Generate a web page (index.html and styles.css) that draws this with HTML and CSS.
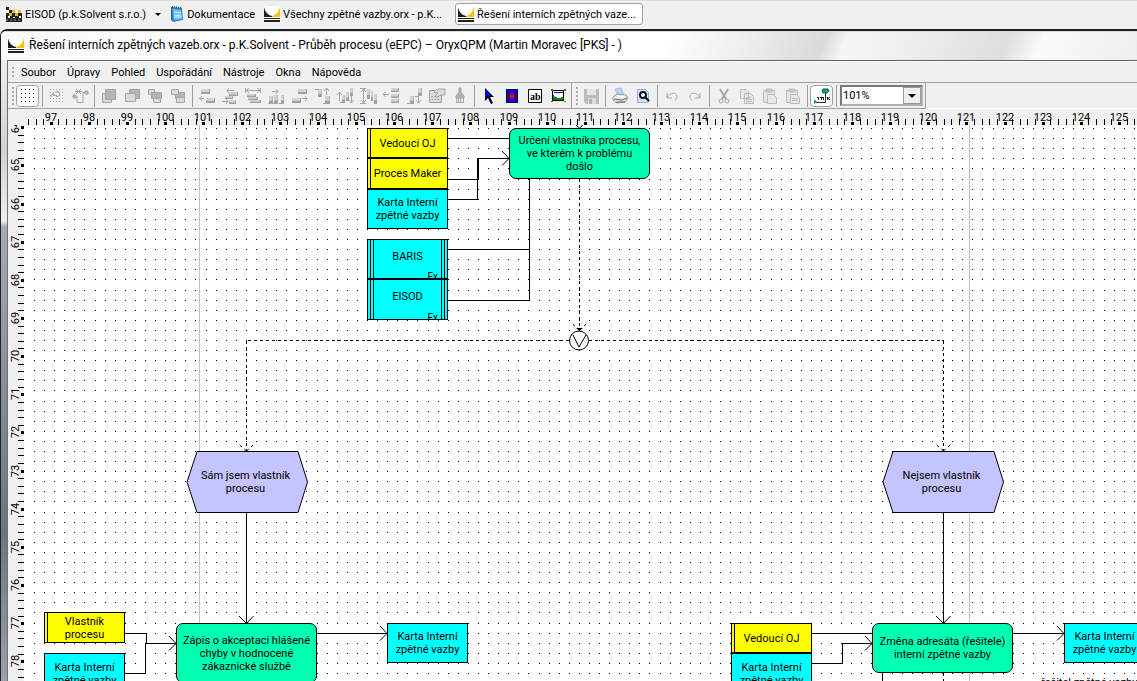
FILE: index.html
```html
<!DOCTYPE html>
<html lang="cs">
<head>
<meta charset="utf-8">
<title>OryxQPM</title>
<link rel="stylesheet" href="styles.css">
</head>
<body>
<svg class="defs" aria-hidden="true">
  <symbol id="logo" viewBox="0 0 16 16"><path fill="#fff" d="M0 0h16v16H0z"/><path fill="#231f20" d="M0 1c1 5 4 8 8 9v1H0z"/><path fill="#f5c211" d="M16 0v11H8v-1c4-1 7-4 8-10z"/><path fill="#231f20" d="M0 12h16v1H0zM0 14h16v2H0z"/></symbol>
  <symbol id="eisod" viewBox="0 0 16 16"><path fill="#222" d="M0 10h16v6H0zM0 1h3v3H0zM3 4h3v3H3zM0 7h3v3H0zM6 7h3v3H6zM12 7h4v3h-4z"/><path fill="#e9b90f" d="M6 4h3v3H6zM9 7h3v3H9zM12 4h3v3h-3zM3 7h3v3H3z"/><path fill="#fff" d="M2 10h2v2H2zM13 10h2v2h-2zM7 11h2v1H7z"/><path stroke="#999" stroke-dasharray="2 2" d="M0 14h16"/></symbol>
  <symbol id="note" viewBox="0 0 14 16"><path fill="#2b8cc4" d="M2 1l10 1 1 12-10 2-2-2z"/><path fill="#6ec3ec" d="M3 3l8 1 1 9-8 1z"/><path stroke="#d8f0fb" d="M4 6l7 1M4 9l7 1M4 11h7"/><path stroke="#315d7c" stroke-dasharray="1 1" stroke-width="2" d="M2 1l10 1"/><path fill="#1b6d9d" d="M1 1h1v13H1z"/></symbol>
  <symbol id="bar-h" viewBox="0 0 9 5" preserveAspectRatio="none"><path fill="#a0a0a0" d="M0 0h9v5H0z"/><path fill="#d2d2d2" d="M0 0h8v3H0z"/></symbol>
</svg>

<nav class="taskbar" aria-label="Okna">
  <button class="task"><svg class="i16"><use href="#eisod"/></svg><span>EISOD (p.k.Solvent s.r.o.)</span><i class="caret"></i></button>
  <button class="task"><svg class="i14"><use href="#note"/></svg><span>Dokumentace</span></button>
  <button class="task"><svg class="i16"><use href="#logo"/></svg><span>Všechny zpětné vazby.orx - p.K...</span></button>
  <button class="task task-active"><svg class="i16"><use href="#logo"/></svg><span>Řešení interních zpětných vaze...</span></button>
</nav>

<main class="window">
  <header class="titlebar"><svg class="i16"><use href="#logo"/></svg><h1>Řešení interních zpětných vazeb.orx - p.K.Solvent - Průběh procesu (eEPC) – OryxQPM (Martin Moravec [PKS] - )</h1></header>
  <div class="client">
    <nav class="menu" aria-label="Nabídka">
      <i class="grip"></i>
      <button>Soubor</button><button>Úpravy</button><button>Pohled</button><button>Uspořádání</button><button>Nástroje</button><button>Okna</button><button>Nápověda</button>
    </nav>
    <div class="toolbars">
      <div class="toolbar toolbar-edit" role="toolbar" aria-label="Úpravy diagramu">
        <i class="grip"></i>
        <button class="tool pressed" aria-label="Mřížka"><svg class="ic"><path stroke="#000" stroke-dasharray="1 3" d="M1 1.500h14M1 5.500h14M1 9.500h14M1 13.500h14"/></svg></button>
        <i class="sep"></i>
        <button class="tool" aria-label="Přichytit k mřížce"><svg class="ic dim"><path stroke-dasharray="1 2" d="M1 1.500h14M1 4.500h14M1 7.500h14M1 10.500h14M1 13.500h14"/><path d="M2 9l2-4 2 3M6 5l3-2 2 4-3 2M4 5l4 4"/></svg></button>
        <button class="tool" aria-label="Spojnice"><svg class="ic dim"><path d="M2 8.500h3v6h6V4.500h3M4 1l5 5M9 1L4 6M3 3.500h7"/><path class="f" d="M1 7h3v3H1zM13 3h3v3h-3z"/></svg></button>
        <i class="sep"></i>
        <button class="tool" aria-label="Do popředí"><svg class="ic dim"><path class="p" d="M1.500 5.500h9v9h-9z"/><path class="f" d="M4.500 1.500h10v10h-10z"/></svg></button>
        <button class="tool" aria-label="Do pozadí"><svg class="ic dim"><path class="f" d="M5.500 1.500h10v9h-10z"/><path class="p" d="M1.500 5.500h10v8h-10z"/></svg></button>
        <button class="tool" aria-label="Vpřed"><svg class="ic dim"><path class="p" d="M1.500 1.500h6v5h-6zM6.500 8.500h7v6h-7z"/><path class="f" d="M4.500 4.500h10v6h-10z"/></svg></button>
        <button class="tool" aria-label="Vzad"><svg class="ic dim"><path class="f" d="M5.500 4.500h9v6h-9z"/><path class="p" d="M1.500 1.500h7v5h-7zM6.500 9.500h8v5h-8z"/></svg></button>
        <i class="sep"></i>
        <button class="tool" aria-label="Zarovnat vlevo"><svg class="ic dim"><use href="#bar-h" x="2" y="1" width="9" height="5"/><use href="#bar-h" x="7" y="10" width="9" height="5"/><path d="M0 10.500h5M3 8l-2 2.500 2 2.500"/></svg></button>
        <button class="tool" aria-label="Zarovnat na střed"><svg class="ic dim"><use href="#bar-h" x="7" y="4" width="9" height="4"/><use href="#bar-h" x="3" y="8" width="8" height="3"/><use href="#bar-h" x="7" y="12" width="7" height="4"/><path d="M5 2.500h7M7 0L5 2.500 7 5M0 13.500h6M4 11l2 2.500L4 16"/></svg></button>
        <button class="tool" aria-label="Stejná šířka"><svg class="ic dim"><path d="M.5 0v5M15.500 0v5M1 2.500h14M4 0L1 2.500 4 5M12 0l3 2.500L12 5"/><use href="#bar-h" x="2" y="6" width="9" height="3"/><use href="#bar-h" x="3" y="9" width="10" height="3"/><use href="#bar-h" x="5" y="12" width="11" height="3"/></svg></button>
        <button class="tool" aria-label="Rozložit vodorovně"><svg class="ic dim"><path d="M4 3.500h6M8 1l2 2.500L8 6"/><use href="#bar-h" x="1" y="8" width="4" height="8"/><use href="#bar-h" x="6" y="7" width="4" height="9"/><use href="#bar-h" x="13" y="7" width="3" height="9"/><path d="M0 15.500h9M11 15.500h5"/></svg></button>
        <button class="tool" aria-label="Zarovnat vpravo"><svg class="ic dim"><use href="#bar-h" x="7" y="1" width="9" height="5"/><use href="#bar-h" x="1" y="10" width="9" height="5"/><path d="M11 10.500h5M14 8l2 2.500-2 2.500"/></svg></button>
        <button class="tool" aria-label="Zarovnat nahoru"><svg class="ic dim"><use href="#bar-h" x="4" y="1" width="4" height="8"/><use href="#bar-h" x="11" y="8" width="5" height="8"/><path d="M1 1.500h4M9 15.500h4M12.500 0v7M10 3l2.500-3L15 3"/></svg></button>
        <button class="tool" aria-label="Zarovnat na střed svisle"><svg class="ic dim"><use href="#bar-h" x="5" y="7" width="3" height="8"/><use href="#bar-h" x="9" y="4" width="3" height="9"/><use href="#bar-h" x="13" y="0" width="3" height="8"/><path d="M2.500 4v9M0 7l2.500-3L5 7M14.500 8v6M12 12l2.500 3 2.500-3M3 14.500h3"/></svg></button>
        <button class="tool" aria-label="Stejná výška"><svg class="ic dim"><path d="M0 .5h6M0 15.500h6M3.500 1v14M1 4l2.500-3L6 4M1 12l2.500 3L6 12"/><use href="#bar-h" x="7" y="1" width="3" height="10"/><use href="#bar-h" x="11" y="3" width="2" height="10"/><use href="#bar-h" x="14" y="6" width="3" height="10"/></svg></button>
        <button class="tool" aria-label="Rozložit svisle"><svg class="ic dim"><path d="M0 6.500h6M3 4L0 6.500 3 9"/><use href="#bar-h" x="8" y="0" width="8" height="4"/><use href="#bar-h" x="8" y="6" width="8" height="4"/><use href="#bar-h" x="8" y="11" width="8" height="4"/></svg></button>
        <button class="tool" aria-label="Zarovnat dolů"><svg class="ic dim"><use href="#bar-h" x="4" y="8" width="4" height="8"/><use href="#bar-h" x="12" y="0" width="4" height="8"/><path d="M1 15.500h5M9 8.500h4M12.500 9v6M10 12l2.500 3 2.500-3"/></svg></button>
        <button class="tool" aria-label="Vlastnosti"><svg class="ic dim"><path class="p" d="M.5 2.500h12v12H.5z"/><path stroke-dasharray="2 1" d="M2 8.500h9M2 11.500h9"/><path class="p" d="M5 4l3-3h8v6h-4L8 9 6 8l3-3z"/></svg></button>
        <button class="tool" aria-label="Formát"><svg class="ic dim"><path class="f" d="M7 0h2v4l3 4v2H4V8l3-4z"/><path d="M4.500 10v5M6.500 10v5M8.500 10v5M11.500 10v5M4 14.500h8"/></svg></button>
        <i class="sep"></i>
        <button class="tool" aria-label="Ukazatel"><svg class="ic"><path fill="#000" d="M4 0l9 9H9l3 6-2 1-3-6-3 3z"/><path fill="#00f" d="M4 1v9l2-3 3 6-2-6h3z"/></svg></button>
        <button class="tool" aria-label="Objekt"><svg class="ic"><path fill="#00f" stroke="#000" d="M2.500 1.500h11v13h-11z"/><path fill="#f00" stroke="#700" d="M7 5h2l2 3v1l-2 2H7L5 9V8z"/></svg></button>
        <button class="tool" aria-label="Text"><svg class="ic"><path fill="#fff" stroke="#000" d="M1.500 1.500h13v13h-13z"/><text class="ab" x="3" y="12">ab</text></svg></button>
        <button class="tool" aria-label="Obrázek"><svg class="ic"><path fill="#fff" stroke="#000" d="M2.500 2.500h11v10h-11z"/><path fill="#108020" d="M3 6l2 3h8v3H3z"/><path fill="#fff" d="M7 7h4v3H7z"/><path fill="#00f" d="M4 4h9v1H4z"/><path fill="#806010" d="M1 1h2v2H1zM14 1h2v2h-2zM1 13h2v1H1zM14 13h2v1h-2z"/></svg></button>
      </div>
      <div class="toolbar toolbar-file" role="toolbar" aria-label="Soubor">
        <i class="grip"></i>
        <button class="tool" aria-label="Uložit"><svg class="ic"><path fill="#bcbcbc" d="M1 1h15v15H3l-2-2z"/><path fill="#e4e4e4" d="M4 1h9v6H4z"/><path fill="#dcdcdc" d="M5 10h8v6H5z"/><path fill="#b2b2b2" d="M6 11h3v5H6z"/></svg></button>
        <i class="sep"></i>
        <button class="tool" aria-label="Tisk"><svg class="ic"><path fill="#b9d2fa" stroke="#a9bfe8" d="M3 1l6-1 3 7-6 2z"/><path fill="#e8e8e8" stroke="#999" d="M1 9l4-3 9 1 2 3-3 4-8 1-4-3z"/><path stroke="#666" d="M2 11l8 1 5-2M4 14h9"/><path stroke="#fff" d="M5 8l7 1"/></svg></button>
        <button class="tool" aria-label="Náhled"><svg class="ic"><path fill="#cfe0fa" stroke="#8fb0e4" d="M2.500 1.500h8l3 3v10h-11z"/><circle cx="8" cy="7" r="3" fill="#e8f5ff" stroke="#111" stroke-width="2"/><path stroke="#111" stroke-width="2" d="M10 9l4 4"/></svg></button>
        <i class="sep"></i>
        <button class="tool" aria-label="Zpět"><svg class="ic dim"><path d="M3 5v5h5M3 10c3-6 9-6 10-2 0 2 0 3-2 4"/></svg></button>
        <button class="tool" aria-label="Znovu"><svg class="ic dim"><path d="M13 5v5H8M13 10C10 4 4 4 3 8c0 2 0 3 2 4"/></svg></button>
        <i class="sep"></i>
        <button class="tool" aria-label="Vyjmout"><svg class="ic dim"><path stroke-width="2" d="M4 1l6 10M12 1L6 11"/><circle cx="5" cy="13" r="2"/><circle cx="11" cy="13" r="2"/></svg></button>
        <button class="tool" aria-label="Kopírovat"><svg class="ic soft"><path d="M1.500 1.500h6l2 2v7h-8zM5.500 5.500h6l3 3v7h-9z"/><path d="M7 9.500h5M7 11.500h6M7 13.500h6"/></svg></button>
        <button class="tool" aria-label="Vložit"><svg class="ic soft"><path d="M1.500 2.500h3v-1h5v1h3v12h-11z"/><path fill="#ccc" d="M4 1h6v3H4z"/><path d="M5.500 6.500h6l3 3v6h-9z"/></svg></button>
        <button class="tool" aria-label="Vložit jinak"><svg class="ic soft"><path d="M1.500 2.500h3v-1h5v1h3v12h-11z"/><path fill="#ccc" d="M4 1h6v3H4z"/><path d="M5.500 6.500h6l3 3v6h-9zM7 10.500h6M7 12.500h6"/></svg></button>
        <i class="sep"></i>
        <button class="tool pressed" aria-label="Popisky"><svg class="ic"><path fill="#10a870" stroke="#056040" d="M9 1h5l1 2-2 2H9L8 3z"/><path stroke="#333" d="M11.500 5v9M1 14.500h11"/><path stroke="#222" d="M3 9.500h2M4.500 9v3M6 9.500h3M7.500 9v3M9.500 9v3M13.500 9v3M16 9l-2 1.500 2 1.500"/><path fill="#10a870" d="M0 11l3 3-3 2z"/></svg></button>
        <i class="sep"></i>
        <label class="zoom"><select aria-label="Měřítko"><option>101%</option></select><i class="drop"></i></label>
      </div>
    </div>
    <section class="workspace" aria-label="Diagram procesu">
      <svg class="ruler-top" id="rulerTop"></svg>
      <svg class="ruler-left" id="rulerLeft"></svg>
      <div class="canvas" id="canvas">
        <svg class="drawing" id="drawing">
          <path id="dots" class="dots"/>
          <g transform="translate(-24 -125)">
            <path class="page" d="M199.500 125v900M969.500 125v900"/>
            <path class="wire" d="M448 138.500h61M448 179.500h30.500v-21M448 199.500h29.500v-41H509M448 249.500h81M448 300.500h81.500V179M246.500 513v110M943.500 513v110M125 633.500h21v10h30M125 673.500h20.500v-30M317 633.500h70M811 633.500h61M811 663.500h31.500v-20H872M1013 633.500h51M882.500 673v60"/>
            <path class="wire dash" d="M579.500 179v151M569 340.500H246M246.500 341v110M589 340.500h355M943.500 341v110M943.500 673v60"/>
            <path class="head" d="M502 151l7 7.500-7 7M239 616l7.500 7.500 7-7.500M936 616l7.500 7.500 7-7.500M169 636l7 7.500-7 7M380 626l7 7.500-7 7M865 636l7 7.500-7 7M1057 626l7 7.500-7 7M576 125l3.500 3 3.500-3"/>
            <path class="head dash" d="M579.500 330l-8-7M579.500 330l8-7M246.500 451l-8-7M246.500 451l8-7M943.500 451l-8-7M943.500 451l8-7"/>
            <path fill="#000" d="M576 328h7l-3.500 3z"/>
            <circle class="gate" cx="579" cy="340.500" r="9.500"/><path class="head" d="M573 335l6 12 7-12"/>
            <path class="event" d="M197 451.500h101l9.500 30.500-9.500 30.500H197L187 482zM893 451.500h101l9.500 30.500-9.500 30.500H893L883 482z"/>
          </g>
        </svg>
        <div class="nodes">
          <div class="node role n-owner1">Vedoucí OJ</div>
          <div class="node role n-maker">Proces Maker</div>
          <div class="node doc n-card1">Karta Interní<br>zpětné vazby</div>
          <div class="node app n-baris">BARIS<small>Fx</small></div>
          <div class="node app n-eisod">EISOD<small>Fx</small></div>
          <div class="node task-node n-assign">Určení vlastníka procesu,<br>ve kterém k problému<br>došlo</div>
          <div class="node label n-own">Sám jsem vlastník<br>procesu</div>
          <div class="node label n-notown">Nejsem vlastník<br>procesu</div>
          <div class="node role n-owner2">Vlastník<br>procesu</div>
          <div class="node doc n-card2">Karta Interní<br>zpětné vazby</div>
          <div class="node task-node n-accept">Zápis o akceptaci hlášené<br>chyby v hodnocené<br>zákaznické službě</div>
          <div class="node doc n-card3">Karta Interní<br>zpětné vazby</div>
          <div class="node role n-owner3">Vedoucí OJ</div>
          <div class="node doc n-card4">Karta Interní<br>zpětné vazby</div>
          <div class="node task-node n-change">Změna adresáta (řešitele)<br>interní zpětné vazby</div>
          <div class="node doc n-card5">Karta Interní<br>zpětné vazby</div>
          <div class="node note n-note">řešitel zpětné vazby</div>
        </div>
      </div>
    </section>
  </div>
</main>
<script src="script.js"></script>
</body>
</html>
```
FILE: styles.css
```css
* { box-sizing: border-box; }
html, body { height: 100%; margin: 0; }
body {
  display: flex; flex-direction: column; overflow: hidden;
  background: #f0f0f0; color: #000;
  font: 11px/13px Roboto, "DejaVu Sans Condensed", sans-serif;
}
button { font: inherit; color: inherit; background: none; border: 0; padding: 0; margin: 0; }
.defs { position: absolute; width: 0; height: 0; }
.i16 { width: 16px; height: 16px; flex: none; }
.i14 { width: 14px; height: 16px; flex: none; }

.taskbar { display: flex; align-items: flex-start; gap: 1px; flex: none; height: 29px; padding: 2px; border-top: 1px solid #dcdcdc; }
.task { display: flex; align-items: center; gap: 3px; height: 22px; padding: 0 3px; white-space: nowrap; border: 1px solid transparent; }
.task-active { background: #fff; border-color: #a0a0a0; border-radius: 3px; padding: 0 6px 0 2px; margin-left: 8px; }
.caret { border: 3px solid transparent; border-top-color: #000; border-bottom: 0; margin-left: 6px; }

.window { flex: 1; min-height: 0; display: flex; flex-direction: column; border-top: 2px solid #222; border-left: 1px solid #222; border-top-left-radius: 7px; padding-left: 6px;
  background: linear-gradient(180deg, #f6f6f6 0, #d5d0d2 120px, #f0ecee 190px, #a5abb5 196px, #6c7482 500px, #9aa1ac 100%); overflow: hidden; }
.titlebar { display: flex; align-items: center; gap: 5px; flex: none; height: 29px; margin-left: -6px; padding: 0 7px 2px;
  background: linear-gradient(115deg, #fafafa 0, #fff 34%, #fff 58%, #ececec 66%, #dadada 72%, #f6f6f6 74%, #eee 80%, #dedede 88%, #fafafa 91%, #eee 100%); border-top: 1px solid #ddd; }
.titlebar h1 { margin: 0; font: 12px/18px Roboto, "Noto Sans", sans-serif; white-space: nowrap; text-shadow: 0 0 6px #fff; }
.client { flex: 1; min-height: 0; display: flex; flex-direction: column; border-top: 1px solid #606060; border-left: 1px solid #707070; background: #f0f0f0; }

.grip { width: 2px; flex: none; background: repeating-linear-gradient(180deg, #a8a8a8 0 2px, transparent 2px 4px); }
.menu { display: flex; align-items: center; gap: 11px; height: 22px; flex: none; padding: 0 4px; border-top: 1px solid #fff; border-bottom: 1px solid #a0a0a0; white-space: nowrap; }
.menu .grip { height: 10px; margin-right: -4px; }

.toolbars { display: flex; flex: none; height: 26px; border-bottom: 1px solid #fff; }
.toolbar { display: flex; align-items: center; flex: none; height: 26px; border-bottom: 1px solid #a0a0a0; border-right: 1px solid #a0a0a0; }
.toolbar .grip { height: 18px; margin: 0 2px 0 4px; }
.toolbar-edit { padding-right: 2px; }
.toolbar-file .grip { margin-right: 1px; }
.tool { display: flex; align-items: center; justify-content: center; width: 23px; height: 22px; flex: none; }
.pressed { background: #fff; border: 1px solid #a0a0a0; border-radius: 4px; }
.sep { width: 1px; height: 22px; margin: 0 2px 0 3px; background: #a0a0a0; flex: none; }
.ic { width: 16px; height: 16px; flex: none; fill: none; overflow: visible; }
.dim { stroke: #a6a6a6; }
.dim .f { fill: #b4b4b4; }
.dim .p { fill: #dadada; }
.dim use { stroke: none; }
.soft { stroke: #bcbcbc; fill: #e6e6e6; }
.ab { font: bold 10px "Liberation Serif", serif; fill: #000; }
.zoom { display: flex; align-items: center; width: 83px; height: 21px; border: 2px solid #777; border-right-color: #b0b0b0; border-bottom-color: #b0b0b0; background: #fff; margin-right: 2px; margin-left: 1px; }
.zoom select { appearance: none; flex: 1; min-width: 0; border: 0; background: none; padding: 0 1px; font: inherit; }
.drop { display: flex; width: 18px; height: 17px; flex: none; align-items: center; justify-content: center; background: #f0f0f0; border: 1px solid #999; pointer-events: none; }
.drop::after { content: ""; border: 4px solid transparent; border-top-color: #000; border-bottom: 0; }

.workspace { flex: 1; min-height: 0; display: grid; grid-template: 16px 1fr / 16px 1fr; }
.ruler-top { grid-column: 1 / 3; width: 100%; height: 16px; font-size: 11px; }
.ruler-left { width: 16px; height: 100%; font-size: 11px; }
.canvas { position: relative; overflow: hidden; background: #fff; }
.drawing { position: absolute; inset: 0; width: 100%; height: 100%; fill: none; }
.dots { stroke: #000; shape-rendering: crispEdges; }
.page { stroke: #c0c0c0; shape-rendering: crispEdges; }
.wire { stroke: #000; shape-rendering: crispEdges; }
.head { stroke: #000; }
.dash { stroke-dasharray: 3 3; }
.gate { fill: #fff; stroke: #000; }
.event { fill: #c4c4ff; stroke: #000; }

.nodes { position: absolute; left: -24px; top: -125px; }
.node { position: absolute; display: flex; align-items: center; justify-content: center; text-align: center; white-space: nowrap; width: 81px; border: 1px solid #000; }
.role { background: linear-gradient(90deg, transparent 2px, #000 2px 3px, transparent 3px) #ff0; height: 31px; }
.doc { background: #0ff; height: 41px; }
.app { height: 40px; padding-bottom: 6px; background: linear-gradient(90deg, transparent 2px, #000 2px 3px, transparent 3px 5px, #000 5px 6px, transparent 6px 73px, #000 73px 74px, transparent 74px 76px, #000 76px 77px, transparent 77px) #0ff; }
.app small { position: absolute; right: 9px; bottom: -1px; font-size: 10px; line-height: 9px; height: 7px; overflow: hidden; }
.task-node { width: 141px; background: #00ffb0; border-radius: 7px; }
.label, .note { border: 0; }
.label { width: 121px; height: 62px; }
.n-owner1 { left: 367px; top: 128px; height: 30px; }
.n-maker { left: 367px; top: 158px; }
.n-card1 { left: 367px; top: 189px; height: 40px; }
.n-baris { left: 367px; top: 239px; }
.n-eisod { left: 367px; top: 279px; height: 41px; }
.n-assign { left: 509px; top: 128px; height: 51px; }
.n-own { left: 185px; top: 451px; }
.n-notown { left: 881px; top: 451px; }
.n-owner2 { left: 44px; top: 612px; }
.n-card2 { left: 44px; top: 653px; }
.n-accept { left: 176px; top: 623px; height: 60px; }
.n-card3 { left: 387px; top: 623px; height: 40px; }
.n-owner3 { left: 731px; top: 623px; height: 30px; }
.n-card4 { left: 731px; top: 653px; }
.n-change { left: 872px; top: 623px; height: 50px; }
.n-card5 { left: 1064px; top: 623px; height: 40px; }
.n-note { left: 1041px; top: 676px; width: auto; }
```
FILE: script.js
```js
const NS = "http://www.w3.org/2000/svg";
const UNIT = 38.15;

function add(parent, name, attrs, text) {
  const el = document.createElementNS(NS, name);
  for (const key in attrs) el.setAttribute(key, attrs[key]);
  if (text !== undefined) el.textContent = text;
  parent.appendChild(el);
}

function drawRulers() {
  const top = document.getElementById("rulerTop");
  const left = document.getElementById("rulerLeft");
  top.replaceChildren();
  left.replaceChildren();
  for (let k = 0; 43 + k * UNIT < top.clientWidth; k++) {
    const x = Math.floor(43.3 + k * UNIT);
    add(top, "rect", { x: x - 1, y: 13, width: 3, height: 3 });
    for (let t = -3; t <= 4; t++) {
      if (t <= 0 && (k > 0 || t === 0)) continue;
      add(top, "rect", { x: Math.floor(43.3 + (k + t / 5) * UNIT), y: 10, width: 1, height: 6 });
    }
    add(top, "text", { x: x, y: 12, "text-anchor": "middle" }, 97 + k);
  }
  for (let k = 0; 3 + k * UNIT < left.clientHeight; k++) {
    const y = Math.floor(2.7 + k * UNIT);
    add(left, "rect", { x: 13, y: y - 1, width: 3, height: 3 });
    for (let t = 1; t <= 4; t++) {
      add(left, "rect", { x: 10, y: Math.floor(2.7 + (k + t / 5) * UNIT), width: 6, height: 1 });
    }
    add(left, "text", { transform: `translate(11 ${y}) rotate(-90)`, "text-anchor": "middle" }, 64 + k);
  }
}

function drawDots() {
  const canvas = document.getElementById("canvas");
  let d = "";
  for (let j = 0; j * 10.09 < canvas.clientHeight; j++) {
    for (let i = 0; i * 10.09 < canvas.clientWidth; i++) {
      d += `M${Math.floor(10.5 + i * 10.09)} ${Math.floor(3.6 + j * 10.09) + 0.5}h1`;
    }
  }
  document.getElementById("dots").setAttribute("d", d);
}

function draw() { drawRulers(); drawDots(); }
window.addEventListener("resize", draw);
draw();
```
